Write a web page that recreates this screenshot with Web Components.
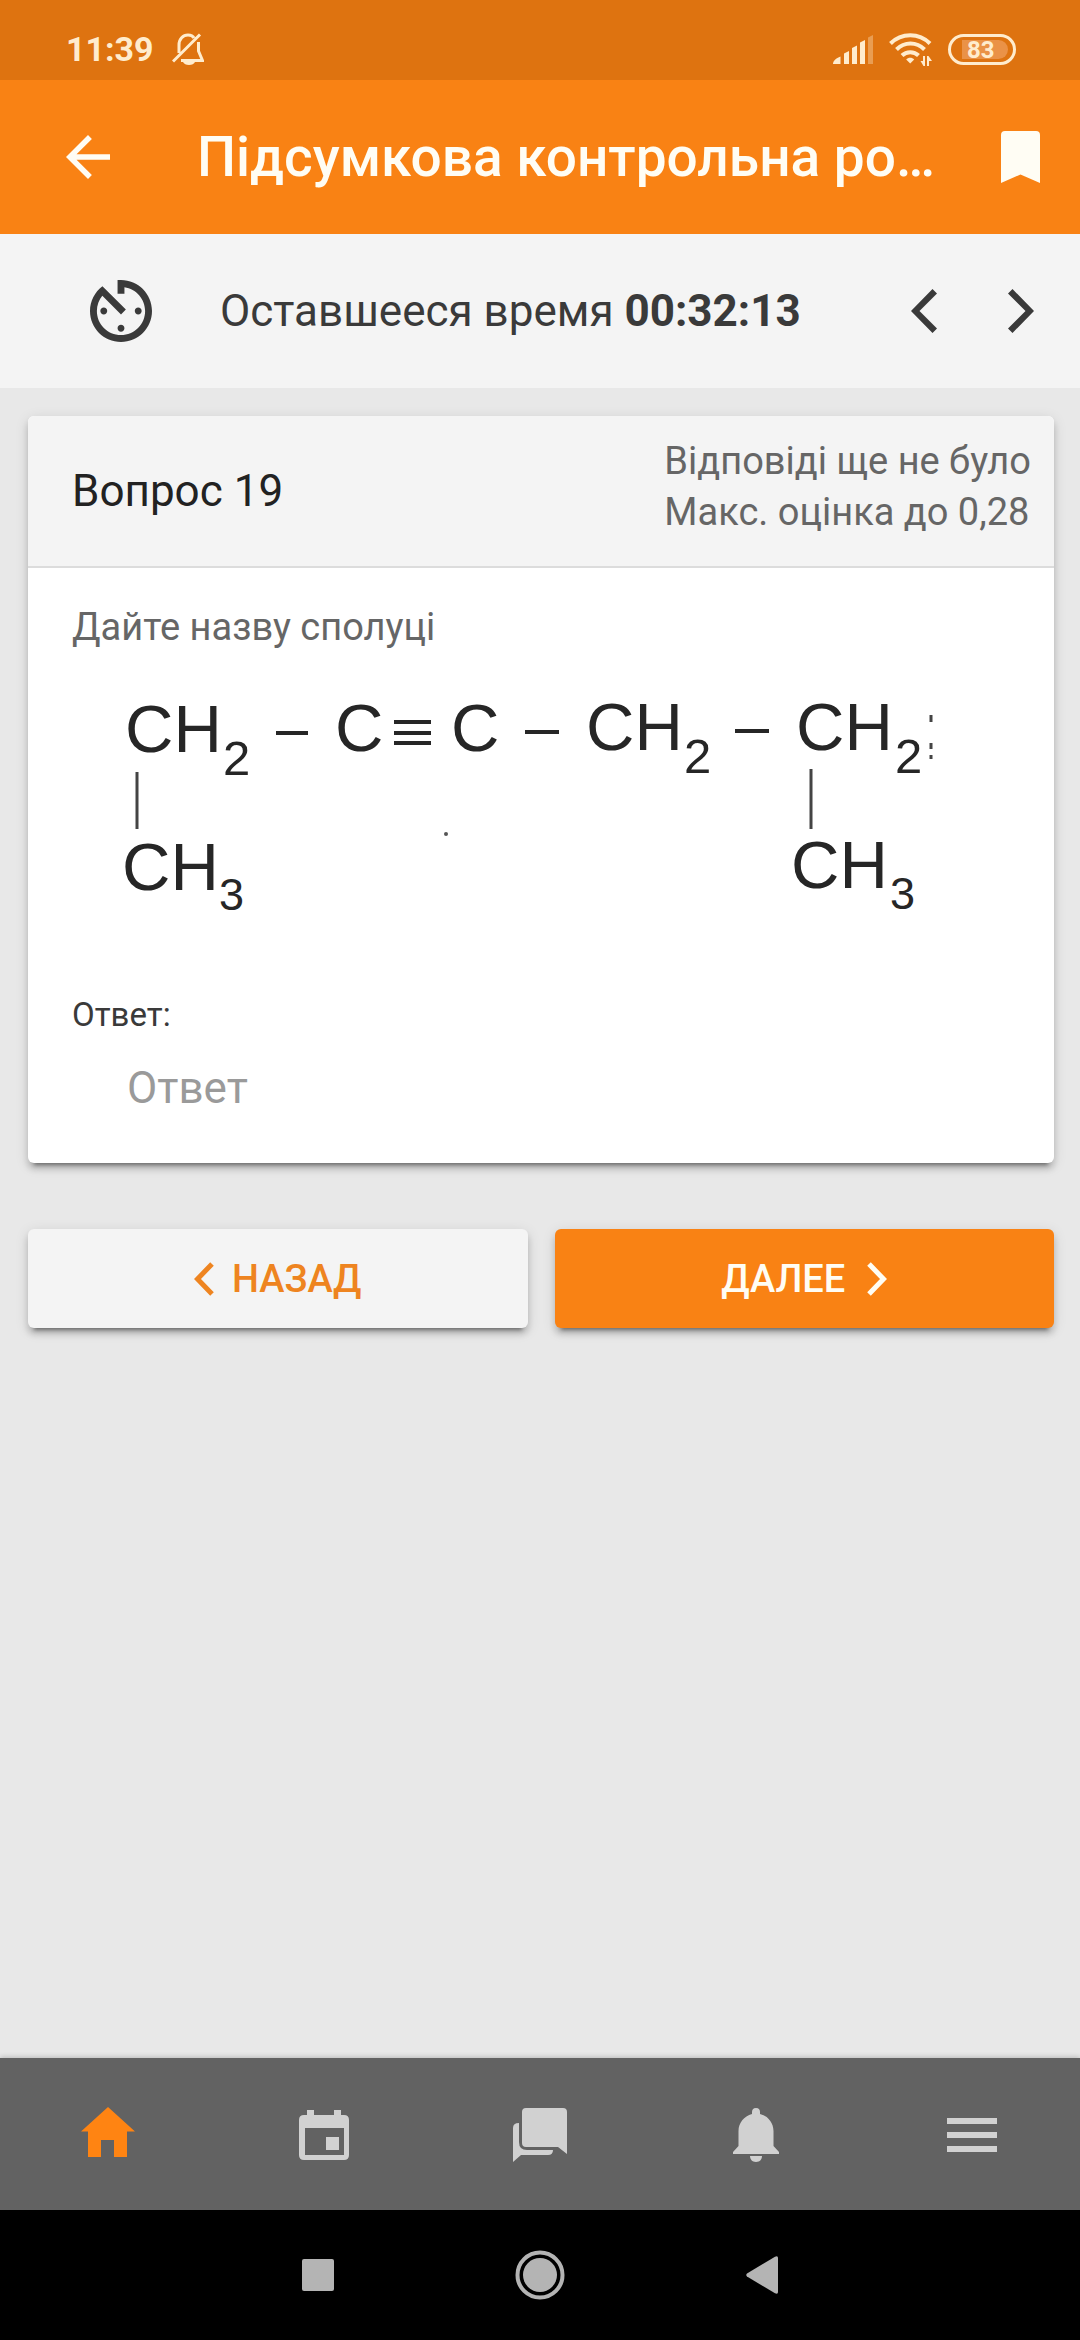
<!DOCTYPE html>
<html lang="uk">
<head>
<meta charset="utf-8">
<meta name="viewport" content="width=device-width, initial-scale=1">
<title>Підсумкова контрольна робота</title>
<style>
  html {
    --primary: #f98214;
    --primary-dark: #de7310;
    --surface: #f4f4f4;
    --text: #3a3a3a;
    --muted: #666;
    --gutter: 28px;
    --shadow: 0 6px 6px rgba(0, 0, 0, 0.16), 0 8px 4px -6px rgba(0, 0, 0, 0.4), 0 3px 14px rgba(0, 0, 0, 0.12);
  }

  body {
    margin: 0;
    min-height: 100vh;
    display: flex;
    flex-direction: column;
    background: #e8e8e8;
    color: var(--text);
    font-family: Roboto, "Noto Sans", sans-serif;
    font-size: 44px;
  }

  main {
    flex: 1;
    padding: var(--gutter) 26px 40px var(--gutter);
  }
</style>
</head>
<body>
  <status-bar time="11:39" battery="83"></status-bar>
  <app-header>Підсумкова контрольна ро…</app-header>
  <quiz-timer time="00:32:13">Оставшееся время</quiz-timer>
  <main>
    <question-card>
      <span slot="title">Вопрос 19</span>
      <span slot="state">Відповіді ще не було</span>
      <span slot="grade">Макс. оцінка до 0,28</span>
      <span slot="text">Дайте назву сполуці</span>
      <structural-formula slot="figure"></structural-formula>
    </question-card>
    <quiz-actions></quiz-actions>
  </main>
  <tab-bar></tab-bar>
  <system-nav></system-nav>

<script>
"use strict";

////////////////////////////////////////////
// Constants
// Each icon: width, height, viewBox, markup
const ICONS = {
  bellOff: [32, 32, "0 0 32 32",
    `<g fill="none" stroke="currentColor" stroke-width="3"><path d="M7 20v-8C7 6 11 2 16 2c3 0 5 1 6 3M26.5 9v9l4 9.500H9M1 28.500 28 1.500"/></g><path d="M11 29h12c-1 2-3 3-6 3s-5-1-6-3z"/>`],
  signal: [40, 29, "0 0 40 29",
    `<path d="M0 29c0-3 3-6 7.500-7.500V29zM11 18.500l5-2.500v13h-5zM19 13l5-2.500V29h-5zM27 7.500 32 5v24h-5z"/><path opacity=".35" d="M35 2.500 40 0v29h-5z"/>`],
  wifi: [43, 33, "0 0 43 33",
    `<g fill="none" stroke="currentColor" stroke-width="4"><path d="M1.500 10.500c11-11 28.500-11 39.500 0M7.500 16.500c8-8 20-8 28 0M13 22.500c4.500-4.500 12-4.500 16.500 0"/></g><path d="M21.200 30.500l-4-4c2-2.500 6-2.500 8 0z"/><path d="M36 23v10h-1.500l-3-5H34v-5zM38 33V23h1.500l3.500 5h-3v5z"/>`],
  arrowBack: [44, 44, "4 4 16 16",
    `<path d="M20 11H7.830l5.590-5.590L12 4l-8 8 8 8 1.410-1.410L7.830 13H20z"/>`],
  bookmark: [39, 52, "0 0 39 52",
    `<path d="M4 0h31q4 0 4 4v48l-19.500-8.500L0 52V4q0-4 4-4z"/>`],
  timer: [62, 62, "3 3 18 18",
    `<path d="M11 17c0 .55.45 1 1 1s1-.45 1-1-.45-1-1-1-1 .45-1 1zm0-14v4h2V5.080c3.390.49 6 3.390 6 6.920 0 3.870-3.130 7-7 7s-7-3.130-7-7c0-1.680.59-3.220 1.580-4.420L12 13l1.410-1.410-6.800-6.800v.02C4.420 6.450 3 9.050 3 12c0 4.970 4.020 9 9 9 4.970 0 9-4.030 9-9s-4.030-9-9-9h-1zm7 9c0-.55-.45-1-1-1s-1 .45-1 1 .45 1 1 1 1-.45 1-1zM6 12c0 .55.45 1 1 1s1-.45 1-1-.45-1-1-1-1 .45-1 1z"/>`],
  prev: [26, 44, "0 0 26 44",
    `<path d="M21.500 0 26 4.500 8.500 22 26 39.500 21.500 44 0 22z"/>`],
  next: [26, 44, "0 0 26 44",
    `<path d="M4.500 0 0 4.500 17.500 22 0 39.500 4.500 44 26 22z"/>`],
  back: [20, 34, "0 0 20 34",
    `<path fill="none" stroke="currentColor" stroke-width="5" stroke-linejoin="miter" d="M18 2 3.500 17 18 32"/>`],
  forward: [20, 34, "0 0 20 34",
    `<path fill="none" stroke="currentColor" stroke-width="5" stroke-linejoin="miter" d="M2 2l14.500 15L2 32"/>`],
  home: [54, 56, "0 0 54 56",
    `<path d="M27 0 0 24.500h7V50h13V33h13v17h13V24.500h8z"/>`],
  calendar: [50, 50, "0 0 50 50",
    `<path fill-rule="evenodd" d="M8 0h7v5h20V0h7v5h3q5 0 5 5v35q0 5-5 5H5q-5 0-5-5V10q0-5 5-5h3zM6 18v27h39V18z"/><path d="M27 27h13v13H27z"/>`],
  chat: [54, 54, "0 0 54 54",
    `<path d="M13 0h37q4 0 4 4v42l-9-7H13q-4 0-4-4V4q0-4 4-4z"/><path d="M6 15v19q0 8 8 8h26q0 5-5 5H8l-8 7V20q0-5 6-5z"/>`],
  bell: [46, 54, "0 0 46 54",
    `<path d="M23 0c3 0 4 2 4 4v2c8 2 13.500 9 13.500 17v15l5.500 6v2H0v-2l5.500-6V23C5.500 15 11 8 19 6V4c0-2 1-4 4-4zM17 48h12c0 3-2 6-6 6s-6-3-6-6z"/>`],
  menu: [50, 34, "0 0 50 34",
    `<path d="M0 0h50v6H0zM0 14h50v6H0zM0 28h50v6H0z"/>`],
  recents: [32, 32, "0 0 32 32", `<rect width="32" height="32" rx="2"/>`],
  circle: [50, 50, "0 0 50 50",
    `<circle cx="25" cy="25" r="17"/><circle cx="25" cy="25" r="22.500" fill="none" stroke="currentColor" stroke-width="4"/>`],
  triangle: [32, 38, "0 0 32 38",
    `<path d="M29 .8q3-1.300 3 1.200v34q0 2.500-3 1.200L1 20.500q-1.500-1.500 0-3z"/>`],
};

const TABS = [
  ["home", "В начало", true],
  ["calendar", "Календарь"],
  ["chat", "Сообщения"],
  ["bell", "Уведомления"],
  ["menu", "Меню"],
];

const RESET = `
  button {
    display: flex;
    align-items: center;
    justify-content: center;
    padding: 0;
    border: 0;
    background: none;
    color: inherit;
    font: inherit;
    cursor: pointer;
  }
`;

////////////////////////////////////////////
// Web Components
class BaseElement extends HTMLElement {
  constructor() {
    super();
    this._root = this.attachShadow({ mode: "open" });
  }

  connectedCallback() {
    this._root.innerHTML = this.render();
  }
}

class AppIcon extends BaseElement {
  render() {
    const [width, height, viewBox, markup] = ICONS[this.getAttribute("name")];
    return `
      <style>
        :host { display: inline-flex; flex: none; }
        svg { display: block; fill: currentColor; }
      </style>
      <svg width="${width}" height="${height}" viewBox="${viewBox}" aria-hidden="true">${markup}</svg>
    `;
  }
}

class StatusBar extends BaseElement {
  render() {
    return `
      <style>
        :host {
          display: flex;
          align-items: center;
          height: 80px;
          padding: 18px 64px 0 66px;
          box-sizing: border-box;
          background: var(--primary-dark);
          color: #ffeccd;
          font-size: 34px;
          font-weight: 700;
        }
        .time { margin-right: 18px; }
        .space { flex: 1; }
        app-icon { margin-right: 16px; }
        .battery {
          display: flex;
          align-items: center;
          justify-content: center;
          width: 68px;
          height: 31px;
          padding: 3px;
          box-sizing: border-box;
          border: 3px solid;
          border-radius: 16px;
          font-size: 24px;
          line-height: 20px;
        }
        .level {
          flex: 1;
          height: 19px;
          margin: 0 2px 0 8px;
          border-radius: 0 10px 10px 0;
          padding-left: 5px;
          background: #ea9247;
        }
      </style>
      <span class="time">${this.getAttribute("time")}</span>
      <app-icon name="bellOff"></app-icon>
      <span class="space"></span>
      <app-icon name="signal"></app-icon>
      <app-icon name="wifi"></app-icon>
      <span class="battery"><span class="level">${this.getAttribute("battery")}</span></span>
    `;
  }
}

class AppHeader extends BaseElement {
  render() {
    return `
      <style>
        ${RESET}
        :host {
          display: flex;
          align-items: center;
          height: 154px;
          padding: 0 40px 0 55px;
          background: var(--primary);
          color: #fffdf4;
        }
        .back { width: 66px; height: 66px; }
        h1 {
          flex: 1;
          margin: 0 24px 0 76px;
          overflow: hidden;
          white-space: nowrap;
          text-overflow: ellipsis;
          font-size: 55px;
          font-weight: 500;
        }
      </style>
      <button class="back" aria-label="Назад"><app-icon name="arrowBack"></app-icon></button>
      <h1><slot></slot></h1>
      <button aria-label="Закладка"><app-icon name="bookmark"></app-icon></button>
    `;
  }
}

class QuizTimer extends BaseElement {
  render() {
    return `
      <style>
        ${RESET}
        :host {
          display: flex;
          align-items: center;
          height: 154px;
          padding: 0 11px 0 90px;
          background: var(--surface);
        }
        p { flex: 1; margin: 0 0 0 68px; white-space: nowrap; }
        button { width: 97px; height: 97px; }
      </style>
      <app-icon name="timer"></app-icon>
      <p><slot></slot> <b>${this.getAttribute("time")}</b></p>
      <button aria-label="Предыдущий вопрос"><app-icon name="prev"></app-icon></button>
      <button aria-label="Следующий вопрос"><app-icon name="next"></app-icon></button>
    `;
  }
}

class QuestionCard extends BaseElement {
  render() {
    return `
      <style>
        :host {
          display: block;
          overflow: hidden;
          border-radius: 6px;
          background: #fff;
          box-shadow: var(--shadow);
        }
        header {
          display: flex;
          align-items: center;
          justify-content: space-between;
          min-height: 150px;
          padding: 0 23px 0 44px;
          border-bottom: 2px solid #dcdcdc;
          background: var(--surface);
        }
        h2 { margin: 0; color: #222; font-size: 44px; font-weight: 400; }
        .info {
          display: grid;
          padding-bottom: 8px;
          color: var(--muted);
          font-size: 38px;
          line-height: 51px;
        }
        .body { padding: 34px 44px 45px; }
        .text { margin: 0 0 36px; color: var(--muted); font-size: 38px; line-height: 51px; }
        label { display: block; margin-top: 74px; font-size: 33px; line-height: 44px; }
        input {
          display: block;
          width: 100%;
          height: 60px;
          margin-top: 21px;
          padding: 0 55px;
          box-sizing: border-box;
          border: 0;
          outline: 0;
          background: none;
          color: inherit;
          font: inherit;
        }
        input::placeholder { color: #9a9a9a; opacity: 1; }
      </style>
      <header>
        <h2><slot name="title"></slot></h2>
        <div class="info"><slot name="state"></slot><slot name="grade"></slot></div>
      </header>
      <div class="body">
        <p class="text"><slot name="text"></slot></p>
        <slot name="figure"></slot>
        <label for="answer">Ответ:</label>
        <input id="answer" type="text" placeholder="Ответ" autocomplete="off">
      </div>
    `;
  }
}

// Structural formula of the compound: main chain on top, end groups hanging below.
class StructuralFormula extends BaseElement {
  render() {
    return `
      <style>
        :host { display: block; max-width: 861px; }
        svg { display: block; width: 100%; overflow: visible; }
        text { font-family: "Liberation Sans", Arial, sans-serif; font-size: 67px; fill: #262626; }
        .sub { font-size: 49px; }
        .end { font-size: 45px; }
        path { fill: none; stroke: #262626; stroke-width: 4; }
        .bond { stroke-width: 3; stroke: #444; }
      </style>
      <svg viewBox="0 0 861 230" role="img">
        <text x="53" y="63">CH</text><text class="sub" x="151" y="86">2</text>
        <path d="M204 44h32"/>
        <text x="263" y="62">C</text>
        <path d="M322 33h37M322 44h37M322 54h37"/>
        <text x="379" y="62">C</text>
        <path d="M453 43h34"/>
        <text x="514" y="61">CH</text><text class="sub" x="612" y="84">2</text>
        <path d="M663 42h34"/>
        <text x="724" y="61">CH</text><text class="sub" x="823" y="84">2</text>
        <path class="bond" d="M859 26v7M859 54v6M859 66v4"/>
        <path class="bond" d="M65 83v57M739 80v60"/>
        <text x="50" y="201">CH</text><text class="end" x="147" y="221">3</text>
        <text x="719" y="199">CH</text><text class="end" x="818" y="220">3</text>
        <circle cx="374" cy="145" r="2" fill="#555"/>
      </svg>
    `;
  }
}

class QuizActions extends BaseElement {
  render() {
    return `
      <style>
        ${RESET}
        :host {
          display: grid;
          grid-template-columns: 1fr 1fr;
          gap: 27px;
          margin-top: 66px;
        }
        button {
          height: 99px;
          border-radius: 6px;
          box-shadow: var(--shadow);
          font-size: 38px;
          font-weight: 500;
        }
        .prev { gap: 18px; background: var(--surface); color: #ee8420; }
        .next { gap: 22px; background: var(--primary); color: #fffdf4; }
      </style>
      <button class="prev"><app-icon name="back"></app-icon>НАЗАД</button>
      <button class="next">ДАЛЕЕ<app-icon name="forward"></app-icon></button>
    `;
  }
}

class TabBar extends BaseElement {
  render() {
    const tabs = TABS.map(
      ([icon, label, active]) =>
        `<a href="#${icon}" aria-label="${label}" ${active ? 'aria-current="page"' : ""}><app-icon name="${icon}"></app-icon></a>`
    ).join("");
    return `
      <style>
        :host { display: block; background: #626262; box-shadow: 0 -1px 5px rgba(0, 0, 0, 0.2); }
        nav { display: grid; grid-template-columns: repeat(5, 1fr); height: 150px; padding-top: 2px; }
        a { display: flex; align-items: center; justify-content: center; color: #d1d1d1; }
        a[aria-current] { color: #ff8412; }
      </style>
      <nav>${tabs}</nav>
    `;
  }
}

class SystemNav extends BaseElement {
  render() {
    return `
      <style>
        ${RESET}
        :host {
          display: grid;
          grid-template-columns: repeat(3, 222px);
          justify-content: center;
          height: 130px;
          background: #000;
          color: #b4b4b4;
        }
      </style>
      <button aria-label="Недавние"><app-icon name="recents"></app-icon></button>
      <button aria-label="Домой"><app-icon name="circle"></app-icon></button>
      <button aria-label="Назад"><app-icon name="triangle"></app-icon></button>
    `;
  }
}

////////////////////////////////////////////
// Executed Code
customElements.define("app-icon", AppIcon);
customElements.define("status-bar", StatusBar);
customElements.define("app-header", AppHeader);
customElements.define("quiz-timer", QuizTimer);
customElements.define("question-card", QuestionCard);
customElements.define("structural-formula", StructuralFormula);
customElements.define("quiz-actions", QuizActions);
customElements.define("tab-bar", TabBar);
customElements.define("system-nav", SystemNav);
</script>
</body>
</html>
